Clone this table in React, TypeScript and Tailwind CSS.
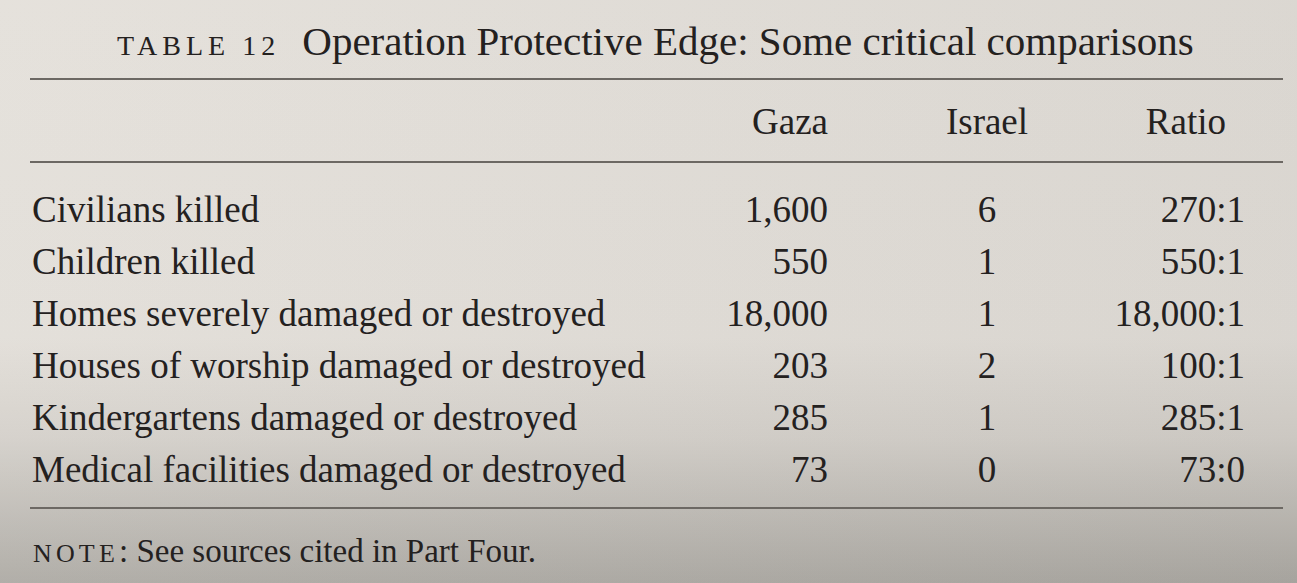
const rows = [
  { label: 'Civilians killed', gaza: '1,600', israel: '6', ratio: '270:1' },
  { label: 'Children killed', gaza: '550', israel: '1', ratio: '550:1' },
  { label: 'Homes severely damaged or destroyed', gaza: '18,000', israel: '1', ratio: '18,000:1' },
  { label: 'Houses of worship damaged or destroyed', gaza: '203', israel: '2', ratio: '100:1' },
  { label: 'Kindergartens damaged or destroyed', gaza: '285', israel: '1', ratio: '285:1' },
  { label: 'Medical facilities damaged or destroyed', gaza: '73', israel: '0', ratio: '73:0' },
];

function Rule() {
  return <div className="h-[2px] w-full bg-[#6c6863]" />;
}

export default function App() {
  return (
    <div className="min-h-[583px] w-full overflow-hidden bg-[linear-gradient(90deg,rgba(255,255,255,0.05),rgba(0,0,0,0.04)),linear-gradient(180deg,#e4e0da_0%,#e2ded8_58%,#d4d0ca_75%,#adaaa4_100%)] font-['Liberation_Serif',serif] text-[#24211f]">
      <div className="ml-[30px] w-[1253px] pt-[16px]">
        {/* caption */}
        <div className="h-[50px] whitespace-nowrap pl-[87px] text-[41px] leading-[50px]">
          <span className="text-[28px] tracking-[0.18em]">TABLE 12</span>
          <span className="ml-[22px]">Operation Protective Edge: Some critical comparisons</span>
        </div>

        <div className="mt-[12px]">
          <Rule />
        </div>

        {/* column heads */}
        <div className="mt-[16px] grid grid-cols-[678px_120px_318px_99px] text-[37px] leading-[52px]">
          <div />
          <div className="text-right">Gaza</div>
          <div className="text-center">Israel</div>
          <div className="flex justify-end whitespace-nowrap pr-[19px]">Ratio</div>
        </div>

        <div className="mt-[13px]">
          <Rule />
        </div>

        {/* body */}
        <div className="mt-[21px] text-[37px] leading-[52px]">
          {rows.map((r) => (
            <div key={r.label} className="grid grid-cols-[678px_120px_318px_99px]">
              <div className="whitespace-nowrap pl-[2px]">{r.label}</div>
              <div className="flex justify-end whitespace-nowrap">{r.gaza}</div>
              <div className="text-center">{r.israel}</div>
              <div className="flex justify-end whitespace-nowrap">{r.ratio}</div>
            </div>
          ))}
        </div>

        <div className="mt-[11px]">
          <Rule />
        </div>

        {/* note */}
        <div className="mt-[22px] whitespace-nowrap pl-[3px] text-[33px] leading-[40px]">
          <span className="text-[26px] tracking-[0.16em]">NOTE</span>
          <span>: See sources cited in Part Four.</span>
        </div>
      </div>
    </div>
  );
}
